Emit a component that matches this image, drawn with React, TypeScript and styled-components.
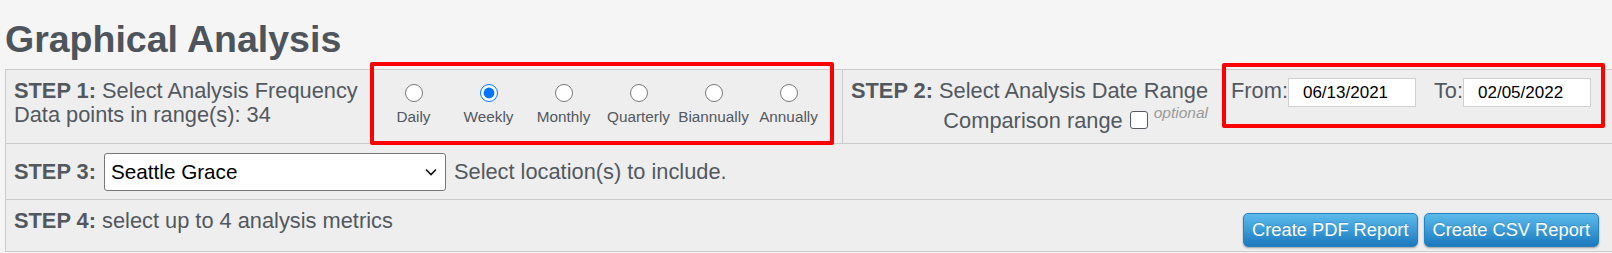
import React, { FC } from "react";
import styled, { createGlobalStyle } from "styled-components";

const GlobalStyle = createGlobalStyle`
  html, body {
    margin: 0;
    padding: 0;
  }
  body {
    background: #f5f5f5;
    font-family: "Liberation Sans", Arial, sans-serif;
    color: #52585e;
    overflow: hidden;
  }
`;

const Title = styled.h1`
  margin: 17px 0 8px 5px;
  font-size: 37.5px;
  line-height: 44px;
  font-weight: bold;
  color: #4d545b;
`;

const Panel = styled.div`
  margin-left: 5px;
  border: 1px solid #cccccc;
  border-right: none;
  background: #eeeeee;
  font-size: 21.8px;
  line-height: 24px;
`;

interface RowProps {
  height: number;
  last?: boolean;
}

const Row = styled.div<RowProps>`
  display: flex;
  height: ${({ height }) => height}px;
  border-bottom: ${({ last }) => (last ? "none" : "1px solid #cccccc")};
`;

const Cell = styled.div<{ divided?: boolean }>`
  display: flex;
  box-sizing: border-box;
  padding-left: 8px;
  ${({ divided }) =>
    divided
      ? "flex: none; width: 837px; border-right: 1px solid #cccccc;"
      : "flex: 1; min-width: 0;"}
`;

const StepText = styled.div<{ alignRight?: boolean }>`
  flex: none;
  padding-top: 9px;
  text-align: ${({ alignRight }) => (alignRight ? "right" : "left")};
  white-space: nowrap;
`;

const StepLabel = styled.b`
  font-weight: bold;
`;

// red annotation frames drawn over the groups
const RadioGroup = styled.div`
  position: relative;
  display: flex;
  flex: none;
  margin: 0 16px 0 auto;

  &::after {
    content: "";
    position: absolute;
    top: -8px;
    bottom: -2px;
    left: -6px;
    right: -8px;
    border: 4px solid #ff0000;
    border-radius: 2px;
    z-index: 2;
    pointer-events: none;
  }
`;

const RadioItem = styled.label`
  display: flex;
  flex-direction: column;
  align-items: center;
  gap: 6px;
  width: 75px;
  padding-top: 14px;
  font-size: 15.3px;
  line-height: 18px;
`;

const Radio = styled.input`
  margin: 0;
  width: 18px;
  height: 18px;
  accent-color: #0075ff;
`;

const CheckBox = styled.input`
  appearance: none;
  box-sizing: border-box;
  display: inline-block;
  margin: 0 6px 0 1px;
  width: 18px;
  height: 18px;
  border: 1.5px solid #555b60;
  border-radius: 3px;
  background: #ffffff;
  vertical-align: -1px;
`;

const Optional = styled.sup`
  font-size: 15.5px;
  line-height: 20px;
  font-style: italic;
  vertical-align: 10px;
  color: #9a9a9a;
`;

const DateGroup = styled.div`
  position: relative;
  display: flex;
  flex: none;
  align-items: baseline;
  align-self: stretch;
  margin-left: 23px;
  padding-top: 8px;
  box-sizing: border-box;

  &::after {
    content: "";
    position: absolute;
    top: -7px;
    bottom: 15px;
    left: -9px;
    right: -14px;
    border: 4px solid #ff0000;
    border-radius: 2px;
    z-index: 2;
    pointer-events: none;
  }
`;

const DateLabel = styled.span<{ spaced?: boolean }>`
  margin-left: ${({ spaced }) => (spaced ? "18px" : "0")};
`;

const DateInput = styled.input`
  box-sizing: border-box;
  width: 128px;
  height: 29px;
  margin: 0;
  padding: 0 0 0 14px;
  border: 1px solid #d0d0d0;
  background: #ffffff;
  font-family: "Liberation Sans", Arial, sans-serif;
  font-size: 17px;
  color: #000000;
  outline: none;
`;

const InlineRow = styled.div`
  display: flex;
  align-items: center;
  padding-left: 8px;
`;

const SelectWrap = styled.div`
  position: relative;
  margin: 0 8px 0 8px;
`;

const Select = styled.select`
  appearance: none;
  box-sizing: border-box;
  width: 342px;
  height: 38px;
  margin: 0;
  padding: 0 0 0 6px;
  border: 1px solid #767676;
  border-radius: 3px;
  background: #ffffff;
  font-family: "Liberation Sans", Arial, sans-serif;
  font-size: 20.7px;
  color: #000000;
  outline: none;
`;

const Chevron = styled.svg`
  position: absolute;
  right: 9px;
  top: 15px;
  pointer-events: none;
`;

const FooterRow = styled.div`
  display: flex;
  flex: 1;
  justify-content: space-between;
  align-items: flex-start;
  padding: 0 13px 0 8px;
`;

const Buttons = styled.div`
  display: flex;
  gap: 6px;
  margin-top: 13px;
`;

const ReportButton = styled.button`
  height: 34px;
  padding: 0 8px;
  border: 1px solid #2682c2;
  border-radius: 5px;
  background: linear-gradient(to bottom, #5dbbea 0%, #3a9bd6 50%, #1b78bd 100%);
  box-shadow: 0 1px 2px rgba(0, 0, 0, 0.35);
  color: #ffffff;
  font-family: "Liberation Sans", Arial, sans-serif;
  font-size: 18.3px;
  text-shadow: 0 -1px 0 rgba(0, 0, 0, 0.15);
  cursor: pointer;
`;

const frequencies = [
  "Daily",
  "Weekly",
  "Monthly",
  "Quarterly",
  "Biannually",
  "Annually"
];

const App: FC = () => {
  return (
    <>
      <GlobalStyle />
      <Title>Graphical Analysis</Title>
      <Panel>
        <Row height={73}>
          <Cell divided>
            <StepText>
              <StepLabel>STEP 1:</StepLabel> Select Analysis Frequency
              <br />
              Data points in range(s): 34
            </StepText>
            <RadioGroup>
              {frequencies.map(f => (
                <RadioItem key={f}>
                  <Radio
                    type="radio"
                    name="frequency"
                    defaultChecked={f === "Weekly"}
                  />
                  {f}
                </RadioItem>
              ))}
            </RadioGroup>
          </Cell>
          <Cell>
            <StepText alignRight>
              <StepLabel>STEP 2:</StepLabel> Select Analysis Date Range
              <br />
              Comparison range <CheckBox type="checkbox" />
              <Optional>optional</Optional>
            </StepText>
            <DateGroup>
              <DateLabel>From:</DateLabel>
              <DateInput type="text" defaultValue="06/13/2021" />
              <DateLabel spaced>To:</DateLabel>
              <DateInput type="text" defaultValue="02/05/2022" />
            </DateGroup>
          </Cell>
        </Row>
        <Row height={55}>
          <InlineRow>
            <StepLabel>STEP 3:</StepLabel>
            <SelectWrap>
              <Select defaultValue="seattle">
                <option value="seattle">Seattle Grace</option>
              </Select>
              <Chevron width="12" height="8" viewBox="0 0 12 8">
                <path
                  d="M1 1.5 L6 6.5 L11 1.5"
                  fill="none"
                  stroke="#111"
                  strokeWidth="1.6"
                />
              </Chevron>
            </SelectWrap>
            Select location(s) to include.
          </InlineRow>
        </Row>
        <Row height={51} last>
          <FooterRow>
            <StepText>
              <StepLabel>STEP 4:</StepLabel> select up to 4 analysis metrics
            </StepText>
            <Buttons>
              <ReportButton>Create PDF Report</ReportButton>
              <ReportButton>Create CSV Report</ReportButton>
            </Buttons>
          </FooterRow>
        </Row>
      </Panel>
    </>
  );
};

export default App;
